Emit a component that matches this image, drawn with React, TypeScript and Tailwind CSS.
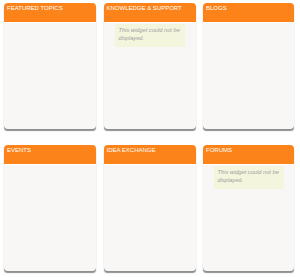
const widgets = [
  { title: 'FEATURED TOPICS', error: false },
  { title: 'KNOWLEDGE & SUPPORT', error: true },
  { title: 'BLOGS', error: false },
  { title: 'EVENTS', error: false },
  { title: 'IDEA EXCHANGE', error: false },
  { title: 'FORUMS', error: true },
]

function Widget({ title, error }: { title: string; error: boolean }) {
  return (
    <div className="flex h-[126px] flex-col rounded-[4px] bg-[#f8f7f5] shadow-[0_2px_1px_-0.5px_#8f8f8f]">
      <div className="h-[20px] shrink-0 rounded-t-[4px] border-b border-white bg-[#fb8319] px-[3px] text-[6px] leading-[10px] text-white">
        {title}
      </div>
      {error && (
        <div className="mx-auto mt-[1px] w-[70px] bg-[#f4f5dd] px-[4px] pt-[2px] pb-[5px] text-[5.7px] italic leading-[8px] text-[#a0a0a0]">
          This widget could not be displayed.
        </div>
      )}
    </div>
  )
}

export default function App() {
  return (
    <div
      className="h-[277px] w-[300px] bg-white pt-[3px] pl-[4px]"
      style={{ fontFamily: '"Liberation Sans", Arial, sans-serif' }}
    >
      <div className="grid grid-cols-[92px_92px_91px] gap-x-[7.5px] gap-y-[16px]">
        {widgets.map((w) => (
          <Widget key={w.title} title={w.title} error={w.error} />
        ))}
      </div>
    </div>
  )
}
